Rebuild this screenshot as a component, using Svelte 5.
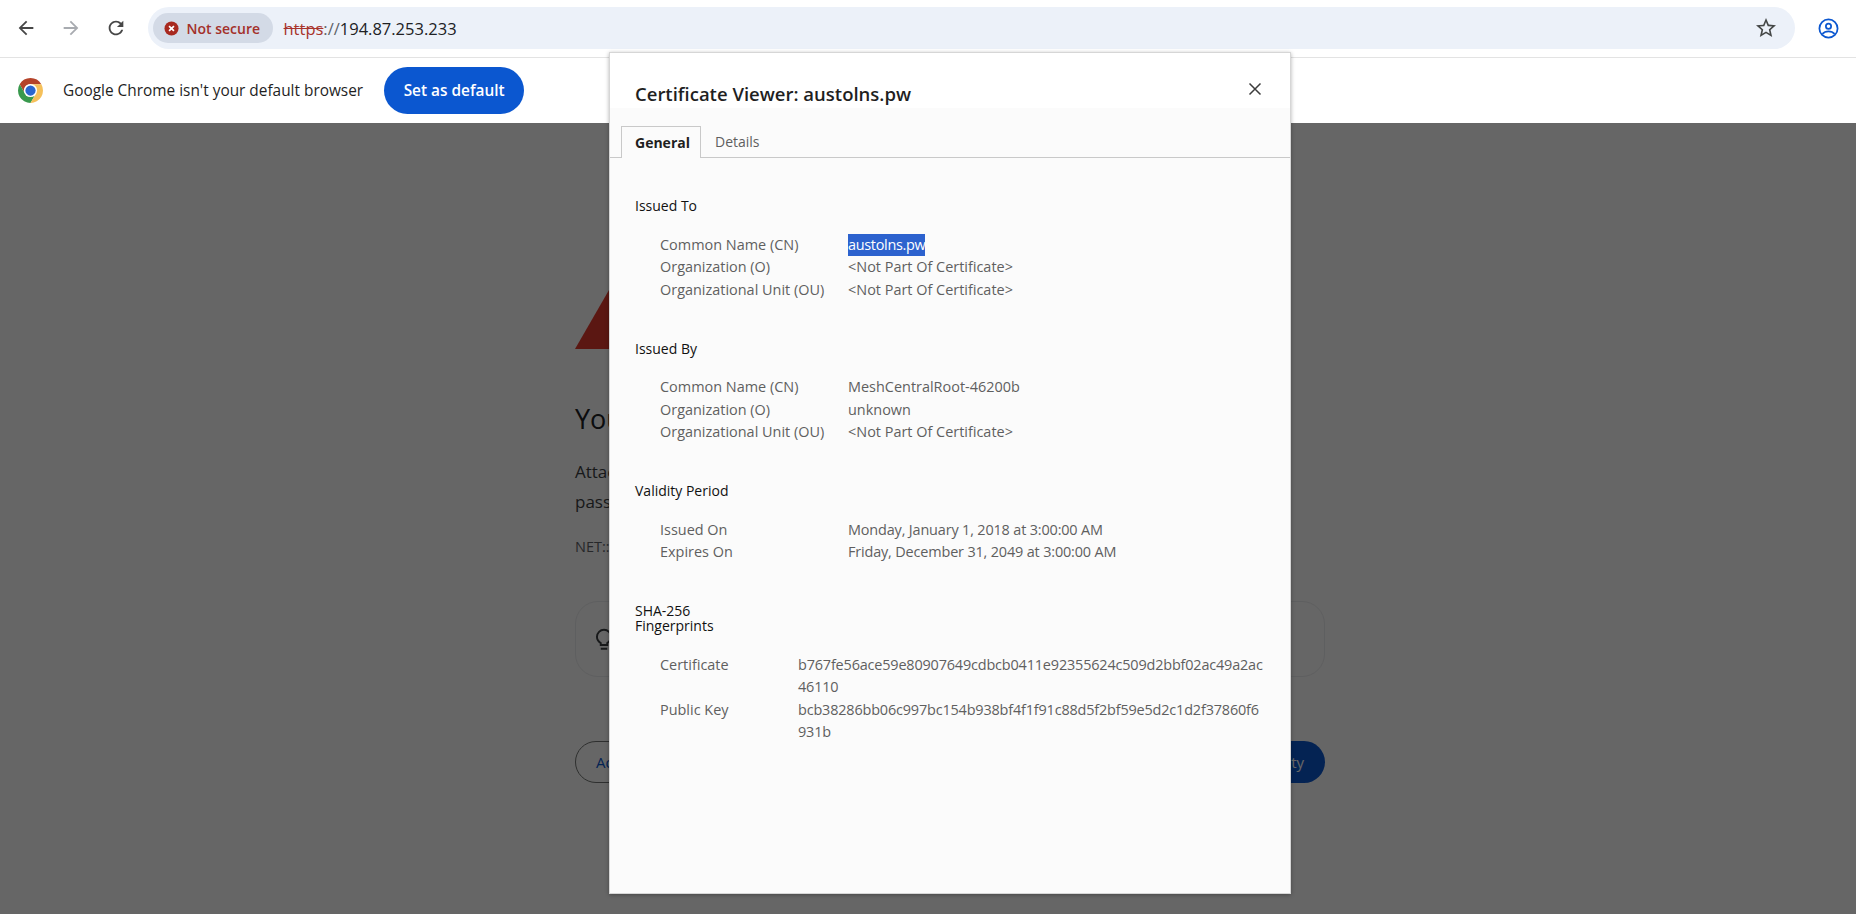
<script lang="ts">
	// Certificate fields, grouped the way the viewer lists them
	const sections = [
		{
			title: 'Issued To',
			rows: [
				{ label: 'Common Name (CN)', value: 'austolns.pw', selected: true },
				{ label: 'Organization (O)', value: '<Not Part Of Certificate>' },
				{ label: 'Organizational Unit (OU)', value: '<Not Part Of Certificate>' }
			]
		},
		{
			title: 'Issued By',
			rows: [
				{ label: 'Common Name (CN)', value: 'MeshCentralRoot-46200b' },
				{ label: 'Organization (O)', value: 'unknown' },
				{ label: 'Organizational Unit (OU)', value: '<Not Part Of Certificate>' }
			]
		},
		{
			title: 'Validity Period',
			rows: [
				{ label: 'Issued On', value: 'Monday, January 1, 2018 at 3:00:00 AM', tight: true },
				{ label: 'Expires On', value: 'Friday, December 31, 2049 at 3:00:00 AM', tight: true }
			]
		}
	];

	const fingerprints = [
		{ label: 'Certificate', value: 'b767fe56ace59e80907649cdbcb0411e92355624c509d2bbf02ac49a2ac46110' },
		{ label: 'Public Key', value: 'bcb38286bb06c997bc154b938bf4f1f91c88d5f2bf59e5d2c1d2f37860f6931b' }
	];
</script>

<div class="window">
	<header class="toolbar">
		<svg class="nav" viewBox="0 0 24 24"><path d="M20 11H7.83l5.59-5.59L12 4l-8 8 8 8 1.41-1.41L7.83 13H20v-2z" /></svg>
		<svg class="nav off" viewBox="0 0 24 24"><path d="M12 4l-1.41 1.41L16.17 11H4v2h12.17l-5.58 5.59L12 20l8-8z" /></svg>
		<svg class="nav" viewBox="0 0 24 24"><path d="M17.65 6.35C16.2 4.9 14.21 4 12 4c-4.42 0-7.99 3.58-7.99 8s3.57 8 7.99 8c3.73 0 6.84-2.55 7.73-6h-2.08c-.82 2.33-3.04 4-5.65 4-3.31 0-6-2.69-6-6s2.69-6 6-6c1.66 0 3.14.69 4.22 1.78L13 11h7V4l-2.35 2.35z" /></svg>
		<div class="omnibox">
			<div class="chip">
				<svg class="chip-icon" viewBox="0 0 16 16">
					<circle cx="8" cy="8" r="7.5" fill="#a8291f" />
					<path d="M5.4 5.4l5.2 5.2M10.6 5.4l-5.2 5.2" stroke="#fff" stroke-width="1.8" fill="none" />
				</svg>
				<span>Not secure</span>
			</div>
			<div class="url"><s>https</s><span class="sep">://</span>194.87.253.233</div>
			<svg class="star" viewBox="0 0 24 24"><path d="M22 9.24l-7.19-.62L12 2 9.19 8.63 2 9.24l5.46 4.73L5.82 21 12 17.27 18.18 21l-1.63-7.03L22 9.24zM12 15.4l-3.76 2.27 1-4.28-3.32-2.88 4.38-.38L12 6.1l1.71 4.04 4.38.38-3.32 2.88 1 4.28L12 15.4z" /></svg>
		</div>
		<svg class="profile" viewBox="0 0 24 24" fill="none" stroke="#0b57d0" stroke-width="2">
			<circle cx="12" cy="12" r="10.4" />
			<circle cx="12" cy="9.5" r="3" />
			<path d="M5 18.2c2-2.4 4.4-3 7-3s5 .6 7 3" />
		</svg>
	</header>

	<div class="infobar">
		<svg class="chrome" viewBox="4 4 40 40">
			<path d="M24 4A20 20 0 0 1 41.32 14H24A10 10 0 0 0 15.34 29L6.68 14A20 20 0 0 1 24 4z" fill="#b5432a" />
			<path d="M6.68 14A20 20 0 0 0 24 44L32.66 29H15.34z" fill="#38994d" />
			<path d="M41.32 14A20 20 0 0 1 24 44L32.66 29 24 14z" fill="#f5c05a" />
			<circle cx="24" cy="24" r="10.5" fill="#fff" />
			<circle cx="24" cy="24" r="8.2" fill="#2a66cf" />
		</svg>
		<span class="info-text">Google Chrome isn't your default browser</span>
		<button class="set-default" type="button">Set as default</button>
	</div>

	<main class="page">
		<svg class="warning" viewBox="0 0 68 59"><path d="M34 0l34 59H0z" fill="#e33b2e" /></svg>
		<h1>Your connection is not private</h1>
		<p class="lead">Attackers might be trying to steal your information from 194.87.253.233 (for example, passwords, messages, or credit cards). Learn more</p>
		<p class="code">NET::ERR_CERT_AUTHORITY_INVALID</p>
		<div class="protect">
			<svg class="bulb" viewBox="0 0 24 24" fill="none" stroke="#3c4043" stroke-width="1.8">
				<path d="M9 17.5v-1.7C6.8 14.5 5.5 12.3 5.5 10a6.5 6.5 0 0 1 13 0c0 2.3-1.3 4.5-3.500 5.800v1.700zM9 21h6" />
			</svg>
		</div>
		<div class="actions">
			<button class="advanced" type="button">Advanced</button>
			<button class="back" type="button">Back to safety</button>
		</div>
		<div class="scrim"></div>
	</main>

	<div class="dialog">
		<div class="dialog-head">
			<h2>Certificate Viewer: austolns.pw</h2>
			<svg class="close" viewBox="0 0 14 14"><path d="M1.5 1.5l11 11M12.5 1.5l-11 11" /></svg>
		</div>
		<div class="dialog-body">
			<div class="tabs">
				<div class="tab active">General</div>
				<div class="tab">Details</div>
			</div>
			<div class="content">
				{#each sections as section}
					<section>
						<h3>{section.title}</h3>
						<div class="rows">
							{#each section.rows as row}
								<span class="label">{row.label}</span>
								<span class="value" class:tight={row.tight}><span class:selected={row.selected}>{row.value}</span></span>
							{/each}
						</div>
					</section>
				{/each}
				<section>
					<h3 class="narrow">SHA-256 Fingerprints</h3>
					<div class="rows prints">
						{#each fingerprints as row}
							<span class="label">{row.label}</span>
							<span class="value">{row.value}</span>
						{/each}
					</div>
				</section>
			</div>
		</div>
	</div>
</div>

<style>
	:global(body) {
		margin: 0;
		background: #fff;
	}

	.window {
		position: relative;
		width: 1856px;
		height: 914px;
		overflow: hidden;
		font-family: 'Open Sans', 'Noto Sans', sans-serif;
		color: #1f1f1f;
	}

	.toolbar {
		display: flex;
		align-items: center;
		box-sizing: border-box;
		height: 58px;
		padding: 0 0 1px 15px;
		border-bottom: 1px solid #e3e3e3;
	}

	.nav {
		width: 22px;
		height: 22px;
		margin-right: 23px;
		fill: #474747;
		flex: none;
	}

	.nav.off {
		fill: #a8abb0;
	}

	.nav:nth-of-type(3) {
		margin-right: 20.5px;
	}

	.omnibox {
		display: flex;
		align-items: center;
		box-sizing: border-box;
		width: 1647px;
		height: 42px;
		padding: 0 17px 0 5px;
		background: #ecf1f9;
		border-radius: 21px;
		flex: none;
	}

	.chip {
		display: flex;
		align-items: center;
		gap: 8px;
		box-sizing: border-box;
		width: 120px;
		height: 30px;
		padding-left: 11px;
		background: #d3dae6;
		border-radius: 15px;
		font-size: 14px;
		font-weight: 600;
		color: #a3302a;
	}

	.chip-icon {
		width: 15px;
		height: 15px;
	}

	.url {
		flex: 1;
		margin-left: 11px;
		font-size: 16.5px;
		color: #202124;
	}

	.url s {
		color: #a8342c;
	}

	.sep {
		color: #5f6368;
	}

	.star {
		width: 24px;
		height: 24px;
		fill: #444746;
	}

	.profile {
		width: 21px;
		height: 21px;
		margin-left: 23px;
		flex: none;
	}

	.infobar {
		display: flex;
		align-items: center;
		height: 65px;
		padding-left: 18px;
		background: #fff;
	}

	.chrome {
		width: 25px;
		height: 25px;
		flex: none;
	}

	.info-text {
		margin-left: 20px;
		font-size: 15.4px;
	}

	.set-default {
		width: 140px;
		height: 47px;
		margin-left: 21px;
		border: 0;
		border-radius: 24px;
		background: #0b57d0;
		color: #fff;
		font: 600 15.4px 'Open Sans', sans-serif;
	}

	.page {
		position: relative;
		box-sizing: border-box;
		height: 791px;
		padding: 167px 531px 0 575px;
		background: #fff;
		overflow: hidden;
		color: #202124;
	}

	.warning {
		display: block;
		width: 68px;
		height: 59px;
	}

	h1 {
		margin: 54px 0 0;
		font-size: 27px;
		font-weight: 400;
		line-height: 32px;
		white-space: nowrap;
	}

	.lead {
		margin: 22px 0 0;
		font-size: 17px;
		line-height: 30px;
		color: #3c4043;
	}

	.code {
		margin: 21px 0 0;
		font-size: 14.5px;
		line-height: 18px;
		color: #5f6368;
	}

	.protect {
		display: flex;
		align-items: center;
		box-sizing: border-box;
		height: 76px;
		margin-top: 45px;
		padding-left: 15px;
		border: 1px solid #ecedef;
		border-radius: 23px;
	}

	.bulb {
		width: 26px;
		height: 26px;
	}

	.actions {
		display: flex;
		justify-content: space-between;
		margin-top: 64px;
	}

	.actions button {
		height: 42px;
		border-radius: 21px;
		font: 400 15px 'Open Sans', sans-serif;
	}

	.advanced {
		width: 130px;
		padding: 0 0 0 20px;
		text-align: left;
		background: #fff;
		border: 1px solid #747775;
		color: #0b57d0;
	}

	.back {
		width: 170px;
		padding: 0 21px 0 0;
		text-align: right;
		background: #0b57d0;
		border: 0;
		color: #fff;
	}

	.scrim {
		position: absolute;
		inset: 0;
		background: rgba(0, 0, 0, 0.6);
	}

	.dialog {
		position: absolute;
		top: 52px;
		left: 609px;
		display: flex;
		flex-direction: column;
		box-sizing: border-box;
		width: 682px;
		height: 842px;
		border: 1px solid #d6d6d6;
		background: #fbfbfb;
		box-shadow: 0 1px 4px rgba(0, 0, 0, 0.3);
	}

	.dialog-head {
		display: flex;
		align-items: center;
		justify-content: space-between;
		box-sizing: border-box;
		height: 55px;
		padding: 26px 28px 0 25px;
		background: #fff;
	}

	h2 {
		margin: 0;
		font-size: 18.5px;
		font-weight: 600;
		color: #1f1f1f;
	}

	.close {
		width: 14px;
		height: 14px;
		margin-top: -10px;
		fill: none;
		stroke: #3c3c3c;
		stroke-width: 1.5;
	}

	.dialog-body {
		flex: 1;
		background: #fbfbfb;
	}

	.tabs {
		display: flex;
		box-sizing: border-box;
		height: 50px;
		padding: 18px 0 0 11px;
		border-bottom: 1px solid #c9c9c9;
	}

	.tab {
		box-sizing: border-box;
		height: 31px;
		padding: 6px 14px;
		font-size: 14px;
		line-height: 20px;
		color: #5f5f5f;
	}

	.tab.active {
		height: 32px;
		padding: 6px 10px 0 13px;
		border: 1px solid #c9c9c9;
		border-bottom: 0;
		background: #fbfbfb;
		font-weight: 700;
		color: #1f1f1f;
	}

	.content {
		padding: 40px 24px 0 25px;
	}

	section + section {
		margin-top: 39.5px;
	}

	h3 {
		margin: 0;
		font-size: 14px;
		font-weight: 400;
		line-height: 15px;
		color: #111;
	}

	h3.narrow {
		width: 90px;
	}

	.rows {
		display: grid;
		grid-template-columns: 188px 1fr;
		margin: 20.5px 0 0 25px;
		font-size: 14.45px;
		line-height: 22.5px;
		color: #5f5f5f;
	}

	.rows.prints {
		grid-template-columns: 138px 1fr;
	}

	.rows.prints .value {
		letter-spacing: -0.17px;
	}

	.value {
		min-width: 0;
		overflow-wrap: anywhere;
	}

	.value.tight {
		letter-spacing: -0.16px;
	}

	.selected {
		display: inline-block;
		letter-spacing: -0.3px;
		background: #2c62ce;
		color: #fff;
	}
</style>
